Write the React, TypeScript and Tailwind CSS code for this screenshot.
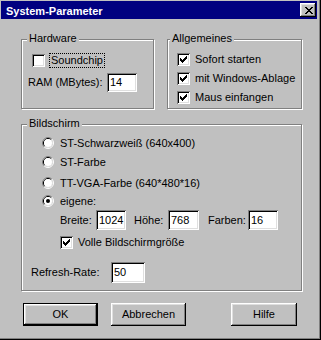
import React from "react";

const sunken =
  "bg-white shadow-[inset_1px_1px_0_#808080,inset_-1px_-1px_0_#ffffff,inset_2px_2px_0_#000000,inset_-2px_-2px_0_#dfdfdf]";

function CheckMark() {
  const cols = [2, 3, 4, 3, 2, 1, 0];
  return (
    <svg width="7" height="7" shapeRendering="crispEdges">
      {cols.map((y, x) => (
        <rect key={x} x={x} y={y} width="1" height="3" fill="#000" />
      ))}
    </svg>
  );
}

function Check({ checked }: { checked?: boolean }) {
  return (
    <div className={`w-[13px] h-[13px] shrink-0 flex items-center justify-center ${sunken}`}>
      {checked && <CheckMark />}
    </div>
  );
}

function Radio({ checked }: { checked?: boolean }) {
  return (
    <svg width="12" height="12" className="shrink-0">
      <path d="M2.11 9.89 A5.5 5.5 0 0 1 9.89 2.11" stroke="#808080" strokeWidth="1" fill="none" />
      <path d="M9.89 2.11 A5.5 5.5 0 0 1 2.11 9.89" stroke="#ffffff" strokeWidth="1" fill="none" />
      <path d="M2.82 9.18 A4.5 4.5 0 0 1 9.18 2.82" stroke="#000000" strokeWidth="1" fill="none" />
      <path d="M9.18 2.82 A4.5 4.5 0 0 1 2.82 9.18" stroke="#dfdfdf" strokeWidth="1" fill="none" />
      <circle cx="6" cy="6" r="4" fill="#ffffff" />
      {checked && <circle cx="6" cy="6" r="2" fill="#000000" />}
    </svg>
  );
}

function Field({ value, w, h }: { value: string; w: string; h: string }) {
  return (
    <div className={`${w} ${h} shrink-0 flex items-center pl-[3px] ${sunken}`}>
      <span>{value}</span>
    </div>
  );
}

function Group({
  label,
  labelLeft,
  className,
  children,
}: {
  label: string;
  labelLeft: string;
  className: string;
  children: React.ReactNode;
}) {
  return (
    <div
      className={`relative border border-[#808080] shadow-[inset_1px_1px_0_#ffffff,1px_1px_0_#ffffff] ${className}`}
    >
      <span className={`absolute -top-[8px] ${labelLeft} px-[2px] bg-[#c0c0c0] leading-[13px]`}>
        {label}
      </span>
      {children}
    </div>
  );
}

const raised =
  "bg-[#c0c0c0] shadow-[inset_-1px_-1px_0_#000000,inset_1px_1px_0_#ffffff,inset_-2px_-2px_0_#808080,inset_2px_2px_0_#dfdfdf]";

function CloseGlyph() {
  const rows: [number, number][][] = [
    [[0, 2], [6, 2]],
    [[1, 2], [5, 2]],
    [[2, 4]],
    [[3, 2]],
    [[2, 4]],
    [[1, 2], [5, 2]],
    [[0, 2], [6, 2]],
  ];
  return (
    <svg width="8" height="7" shapeRendering="crispEdges">
      {rows.map((r, y) =>
        r.map(([x, w], i) => <rect key={`${y}-${i}`} x={x} y={y} width={w} height="1" fill="#000" />)
      )}
    </svg>
  );
}

export default function App() {
  return (
    <div className="w-[321px] h-[340px] overflow-hidden bg-[#c0c0c0] pt-[1px] pl-[1px] pr-[4px] text-[11px] leading-[13px] text-black font-['Liberation_Sans',Arial,sans-serif] shadow-[inset_-1px_-1px_0_#000000,inset_-2px_-2px_0_#808080]">
      {/* Title bar */}
      <div className="h-[18px] bg-[#000080] flex items-center justify-between pl-[5px] pr-[1px]">
        <span className="text-white font-bold text-[11px] leading-[13px] pt-[3px]">System-Parameter</span>
        <div className={`w-[16px] h-[14px] flex items-center justify-center pl-[1px] ${raised}`}>
          <CloseGlyph />
        </div>
      </div>

      <div className="pl-[20px] w-[301px]">
        {/* top row */}
        <div className="flex gap-[13px] mt-[20px]">
          <Group label="Hardware" labelLeft="left-[5px]" className="w-[133px] h-[70px]">
            <div className="flex items-center h-[15px] mt-[13px] ml-[10px]">
              <Check />
              <span className="ml-[4px] border border-dotted border-black px-[1px] leading-[13px]">Soundchip</span>
            </div>
            <div className="flex items-center h-[19px] mt-[5px] ml-[6px]">
              <span className="w-[79px] shrink-0">RAM (MBytes):</span>
              <Field value="14" w="w-[30px]" h="h-[19px]" />
            </div>
          </Group>
          <Group label="Allgemeines" labelLeft="left-[2px]" className="w-[135px] h-[70px]">
            <div className="flex flex-col ml-[9px] mt-[13px] gap-[6px]">
              {["Sofort starten", "mit Windows-Ablage", "Maus einfangen"].map((t) => (
                <div key={t} className="flex items-center h-[13px]">
                  <Check checked />
                  <span className="ml-[5px]">{t}</span>
                </div>
              ))}
            </div>
          </Group>
        </div>

        {/* Bildschirm */}
        <Group label="Bildschirm" labelLeft="left-[5px]" className="w-[281px] h-[167px] mt-[15px]">
          <div className="flex items-center h-[14px] mt-[11px] ml-[20px]">
            <Radio />
            <span className="ml-[6px]">ST-Schwarzweiß (640x400)</span>
          </div>
          <div className="flex items-center h-[14px] mt-[5px] ml-[20px]">
            <Radio />
            <span className="ml-[6px]">ST-Farbe</span>
          </div>
          <div className="flex items-center h-[14px] mt-[7px] ml-[20px]">
            <Radio />
            <span className="ml-[6px]">TT-VGA-Farbe (640*480*16)</span>
          </div>
          <div className="flex items-center h-[14px] mt-[4px] ml-[20px]">
            <Radio checked />
            <span className="ml-[6px]">eigene:</span>
          </div>
          <div className="flex items-center h-[20px] mt-[2px] ml-[38px]">
            <span className="w-[36px] shrink-0">Breite:</span>
            <Field value="1024" w="w-[30px]" h="h-[20px]" />
            <span className="w-[34px] shrink-0 ml-[8px]">Höhe:</span>
            <Field value="768" w="w-[31px]" h="h-[20px]" />
            <span className="w-[40px] shrink-0 ml-[9px]">Farben:</span>
            <Field value="16" w="w-[30px]" h="h-[20px]" />
          </div>
          <div className="flex items-center h-[13px] mt-[6px] ml-[38px]">
            <Check checked />
            <span className="ml-[5px]">Volle Bildschirmgröße</span>
          </div>
          <div className="flex items-center h-[21px] mt-[13px] ml-[9px]">
            <span className="w-[80px] shrink-0">Refresh-Rate:</span>
            <Field value="50" w="w-[34px]" h="h-[21px]" />
          </div>
        </Group>

        {/* Buttons */}
        <div className="flex mt-[12px] ml-[2px]">
          <button className="w-[75px] h-[23px] border border-black p-0">
            <div className={`w-full h-full flex items-center justify-center ${raised}`}>OK</div>
          </button>
          <button className={`w-[75px] h-[23px] ml-[13px] flex items-center justify-center ${raised}`}>Abbrechen</button>
          <button className={`w-[66px] h-[23px] ml-[45px] flex items-center justify-center ${raised}`}>Hilfe</button>
        </div>
      </div>
    </div>
  );
}
